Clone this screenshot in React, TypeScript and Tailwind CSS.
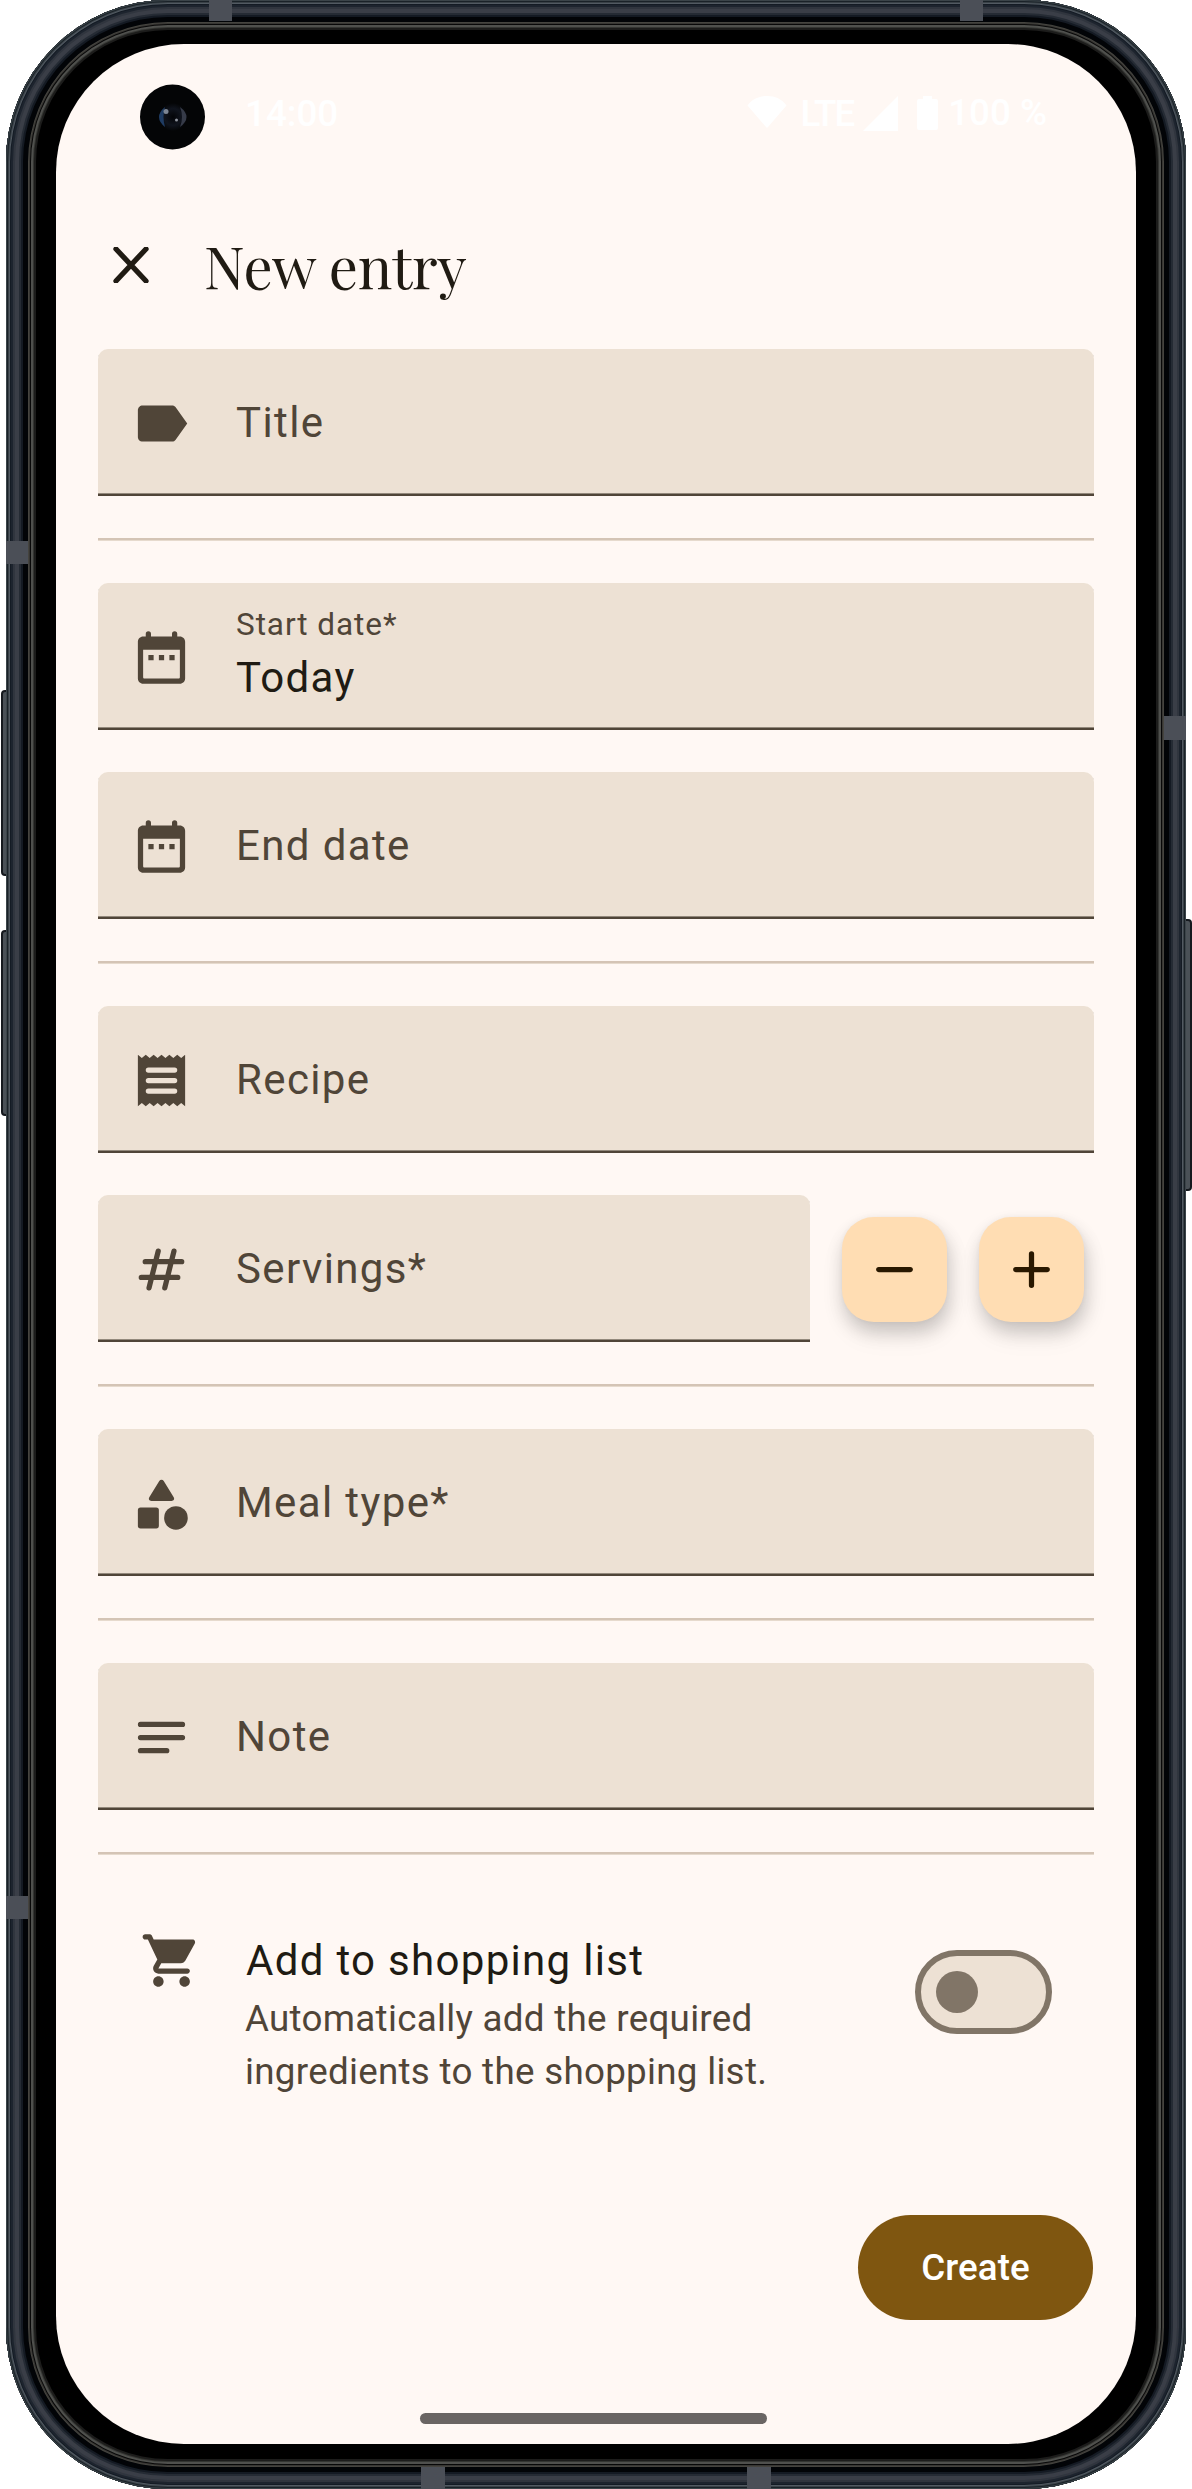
import type { ReactNode } from "react";

function Icon({ children, className = "" }: { children: ReactNode; className?: string }) {
  return (
    <svg viewBox="0 0 24 24" fill="currentColor" className={`size-[63px] shrink-0 ${className}`}>
      {children}
    </svg>
  );
}

const LabelIcon = () => (
  <Icon>
    <path d="M17.4 5.8C17.05 5.3 16.6 5.1 16 5.1H4.8C3.8 5.1 3 5.9 3 6.9v10.2c0 1 .8 1.8 1.8 1.8H16c.6 0 1.05-.2 1.4-.7L21.8 12z" />
  </Icon>
);

const CalendarIcon = () => (
  <Icon>
    <path
      fillRule="evenodd"
      d="M6 4V3a1 1 0 0 1 2 0v1h8V3a1 1 0 0 1 2 0v1h1c1.1 0 2 .9 2 2v14c0 1.1-.9 2-2 2H5c-1.1 0-2-.9-2-2V6c0-1.1.9-2 2-2zM5 9v10.500c0 .3.2.5.5.5h13c.3 0 .5-.2.5-.5V9zM7 11h2v2H7zM11 11h2v2h-2zM15 11h2v2h-2z"
    />
  </Icon>
);

const ReceiptIcon = () => (
  <Icon>
    <path
      fillRule="evenodd"
      d="M3 2.200 4.500 3.400 6 2.200 7.500 3.400 9 2.200 10.500 3.400 12 2.200 13.500 3.400 15 2.200 16.500 3.400 18 2.200 19.500 3.400 21 2.200V21.800L19.500 20.600 18 21.800 16.500 20.600 15 21.800 13.500 20.600 12 21.800 10.500 20.600 9 21.800 7.500 20.600 6 21.800 4.500 20.600 3 21.800zM7 7a1 1 0 0 0 0 2h10a1 1 0 0 0 0-2zM7 11a1 1 0 0 0 0 2h10a1 1 0 0 0 0-2zM7 15a1 1 0 0 0 0 2h10a1 1 0 0 0 0-2z"
    />
  </Icon>
);

const HashIcon = () => (
  <Icon>
    <path
      fill="none"
      stroke="currentColor"
      strokeWidth="2"
      strokeLinecap="round"
      d="M5.800 9H19.700M4.300 15H18.200M10.750 5 7.250 19M16.750 5 13.250 19"
    />
  </Icon>
);

const ShapesIcon = () => (
  <Icon>
    <path d="M11.150 3.400a1 1 0 0 1 1.700 0l3.800 6.200c.4.650 0 1.400-.8 1.400h-7.700c-.8 0-1.200-.750-.8-1.400z" />
    <rect x="3" y="13.500" width="8" height="8" rx="1" />
    <circle cx="17.500" cy="17.500" r="4.500" />
  </Icon>
);

const NotesIcon = () => (
  <Icon>
    <path fill="none" stroke="currentColor" strokeWidth="2" strokeLinecap="round" d="M4 7H20M4 12H20M4 17H14" />
  </Icon>
);

const CartIcon = () => (
  <Icon>
    <path d="M7 18c-1.100 0-1.990.9-1.990 2S5.900 22 7 22s2-.9 2-2-.9-2-2-2zM1 3c0 .55.45 1 1 1h1l3.600 7.590-1.350 2.440C4.520 15.370 5.480 17 7 17h11c.55 0 1-.45 1-1s-.45-1-1-1H7l1.100-2h7.450c.75 0 1.410-.41 1.750-1.030l3.580-6.490c.37-.66-.11-1.480-.87-1.480H5.210l-.67-1.430c-.16-.35-.52-.57-.9-.57H2c-.55 0-1 .45-1 1zm16 15c-1.100 0-1.990.9-1.990 2s.89 2 1.990 2 2-.9 2-2-.9-2-2-2z" />
  </Icon>
);

function Field({ icon, label, value, className = "" }: { icon: ReactNode; label: string; value?: string; className?: string }) {
  return (
    <div
      className={`flex h-[147px] items-center rounded-t-[10px] bg-[#ede1d4] pt-[2px] pl-8 text-[#504538] shadow-[inset_0_-2px_0_#504538,inset_0_-3px_0_#93897c] ${className}`}
    >
      {icon}
      {value ? (
        <div className="ml-[43px] flex flex-col pb-[3px]">
          <span className="text-[31.5px] leading-[42px] tracking-[0.93px]">{label}</span>
          <span className="text-[42px] leading-[63px] tracking-[1.31px] text-[#201b13]">{value}</span>
        </div>
      ) : (
        <span className="ml-[43px] pb-[2px] text-[42px] leading-[63px] tracking-[1.38px]">{label}</span>
      )}
    </div>
  );
}

const Divider = () => <div className="h-[3px] bg-[linear-gradient(#d4c4b5_0_2px,#e6dacd_2px)]" />;

function StepButton({ children }: { children: ReactNode }) {
  return (
    <button className="flex size-[105px] items-center justify-center rounded-[32px] bg-[#ffddb3] text-[#291800] shadow-[2px_10px_18px_rgba(0,0,0,0.18),2px_14px_28px_rgba(0,0,0,0.06),0_0_5px_rgba(0,0,0,0.04)]">
      {children}
    </button>
  );
}

function StatusBar() {
  return (
    <div className="mt-[28px] flex h-[56px] items-center pr-[89px] pl-[189px] text-[36.75px] leading-[44px] font-medium text-white">
      <span className="mt-[2px]">14:00</span>
      <svg viewBox="0 0 40 34" fill="currentColor" className="mt-[-2px] ml-auto h-[34px] w-10">
        <path d="M.5 10.500C5 4 12 1 20 1s15 3 19.500 9.500L21 32q-1 1.500-2 0z" />
      </svg>
      <span className="mt-[2px] ml-[14px] tracking-[-2px]">LTE</span>
      <svg viewBox="0 0 35 35" fill="currentColor" className="ml-[10px] size-[35px]">
        <path d="M35 0V35H0z" />
      </svg>
      <svg viewBox="0 0 21 34" fill="currentColor" className="ml-[19px] h-[34px] w-[21px]">
        <path d="M6 0h9v3h4q2 0 2 2v27q0 2-2 2H2q-2 0-2-2V5q0-2 2-2h4z" />
      </svg>
      <span className="ml-[10px]">100 %</span>
    </div>
  );
}

function Camera() {
  return (
    <svg viewBox="0 0 66 66" className="absolute top-[84px] left-[140px] size-[66px]">
      <defs>
        <radialGradient id="lens">
          <stop offset="0" stopColor="#030407" />
          <stop offset=".6" stopColor="#10141d" />
          <stop offset="1" stopColor="#040506" />
        </radialGradient>
      </defs>
      <circle cx="32.500" cy="33" r="32.500" fill="#040506" />
      <circle cx="33" cy="33" r="14" fill="url(#lens)" />
      <path d="M25 23Q13 33 25 43Q22 33 25 23" fill="#1f3c63" />
      <path d="M40 23Q53 33 40 43Q44 33 40 23" fill="#363b48" />
      <circle cx="26" cy="27.500" r="2.500" fill="#7d8694" />
      <circle cx="36.500" cy="36" r="1.500" fill="#8f949e" />
    </svg>
  );
}

export default function App() {
  return (
    <div className="relative h-[2489px] w-[1192px] overflow-hidden bg-white font-[Roboto,sans-serif]">
      {/* Side buttons */}
      <div className="absolute top-[690px] left-px h-[186px] w-[8px] rounded-l-[4px] border-2 border-[#15191e] bg-[#4a5157]" />
      <div className="absolute top-[930px] left-px h-[186px] w-[8px] rounded-l-[4px] border-2 border-[#15191e] bg-[#4a5157]" />
      <div className="absolute top-[919px] right-0 h-[272px] w-[9px] rounded-r-[4px] border-2 border-[#15191e] bg-[#4a5157]" />

      {/* Metal frame and bezel */}
      <div className="relative ml-[6px] h-[2489px] w-[1180px] rounded-[162px] bg-black px-[50px] pt-[44px] shadow-[inset_0_0_0_1px_#3b4449,inset_0_0_0_2px_#1a2228,inset_0_0_0_3px_#394147,inset_0_0_0_4px_#525a62,inset_0_0_0_5px_#141b24,inset_0_0_0_7px_#1d242e,inset_0_0_0_9px_#30353e,inset_0_0_0_13px_#3a3e47,inset_0_0_0_15px_#252b34,inset_0_0_0_17px_#141a23,inset_0_0_0_22px_#020407,inset_0_0_0_23px_#45443f,inset_0_0_0_24px_#373633,inset_0_0_0_25px_#080808,inset_0_0_0_27px_#4f504d,inset_0_0_0_28px_#343532,inset_0_0_0_30px_#1c1c1b]">
        {/* Antenna bands */}
        <div className="absolute top-0 left-[203px] h-[21px] w-[23px] bg-[#4b4f57]" />
        <div className="absolute top-0 left-[954px] h-[21px] w-[23px] bg-[#4b4f57]" />
        <div className="absolute bottom-0 left-[415px] h-[22px] w-[24px] bg-[#4b4f57]" />
        <div className="absolute bottom-0 left-[741px] h-[22px] w-[24px] bg-[#4b4f57]" />
        <div className="absolute top-[541px] left-0 h-[23px] w-[22px] bg-[#4b4f57]" />
        <div className="absolute top-[1896px] left-0 h-[23px] w-[22px] bg-[#4b4f57]" />
        <div className="absolute top-[716px] right-0 h-[24px] w-[22px] bg-[#4b4f57]" />

        {/* Screen */}
        <div className="flex h-[2400px] w-[1080px] flex-col overflow-hidden rounded-[128px] bg-[#fff8f4]">
          <div className="pt-[13px]">
            <StatusBar />
          </div>

          <header className="mt-[84px] flex h-[80px] items-center pl-[57px] text-[#201b13]">
            <svg viewBox="0 0 36 36" className="size-9" fill="none" stroke="currentColor" strokeWidth="5.250" strokeLinecap="round">
              <path d="M3 2 33 34M33 2 3 34" />
            </svg>
            <h1 className="ml-[55px] font-['Playfair_Display','Liberation_Serif',serif] text-[57.75px] leading-[72px] tracking-[-0.3px]">
              New entry
            </h1>
          </header>

          <main className="mt-[44px] flex flex-col gap-[42px] px-[42px]">
            <Field icon={<LabelIcon />} label="Title" />
            <Divider />
            <Field icon={<CalendarIcon />} label="Start date*" value="Today" />
            <Field icon={<CalendarIcon />} label="End date" />
            <Divider />
            <Field icon={<ReceiptIcon />} label="Recipe" />
            <div className="flex items-center">
              <Field icon={<HashIcon />} label="Servings*" className="w-[712px]" />
              <div className="ml-8 flex gap-8 pt-[2px]">
                <StepButton>
                  <Icon>
                    <path d="M6 12H18" stroke="currentColor" strokeWidth="2" strokeLinecap="round" />
                  </Icon>
                </StepButton>
                <StepButton>
                  <Icon>
                    <path d="M6 12H18M12 6V18" stroke="currentColor" strokeWidth="2" strokeLinecap="round" />
                  </Icon>
                </StepButton>
              </div>
            </div>
            <Divider />
            <Field icon={<ShapesIcon />} label="Meal type*" />
            <Divider />
            <Field icon={<NotesIcon />} label="Note" />
            <Divider />
          </main>

          <section className="mt-[74px] flex pr-[84px] pl-[84px] text-[#504538]">
            <CartIcon />
            <div className="ml-[42px] w-[600px]">
              <p className="pl-px text-[42px] leading-[63px] tracking-[1.31px] text-[#201b13]">Add to shopping list</p>
              <p className="text-[36.75px] leading-[53px] tracking-[0.29px] whitespace-nowrap">
                Automatically add the required
                <br />
                ingredients to the shopping list.
              </p>
            </div>
            <div className="mt-[21px] ml-auto flex h-[84px] w-[137px] items-center rounded-full border-[6px] border-[#817567] bg-[#ede1d4] pl-[15px]">
              <div className="size-[42px] rounded-full bg-[#817567]" />
            </div>
          </section>

          <footer className="mt-auto flex flex-col">
            <button className="mr-[43px] h-[105px] w-[235px] self-end rounded-full bg-[#7f5610] text-[36.75px] font-medium tracking-[0.1px] text-white">
              Create
            </button>
            <div className="mt-[93px] mb-[20px] ml-[364px] h-[11px] w-[347px] rounded-full bg-[#6a6563]" />
          </footer>
        </div>
      </div>
      <Camera />
    </div>
  );
}
